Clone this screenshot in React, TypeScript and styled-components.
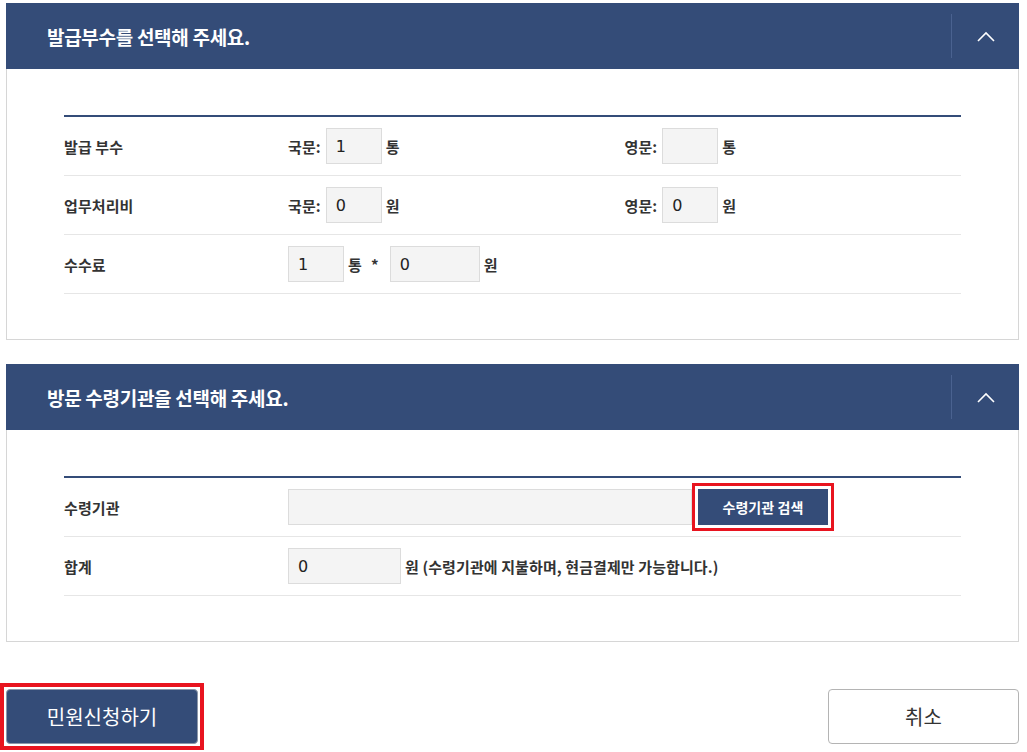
import styled, { createGlobalStyle } from "styled-components";

const NAVY = "#344c78";

const GlobalStyle = createGlobalStyle`
  html, body {
    margin: 0;
    padding: 0;
    background: #fff;
  }
  body {
    font-family: "Noto Sans CJK KR", "Noto Sans", sans-serif;
    color: #333;
  }
  * {
    box-sizing: border-box;
  }
`;

const Page = styled.div`
  width: 1027px;
  padding: 3px 8px 0 6px;
`;

const Panel = styled.section`
  border: 1px solid #d6d6d6;
  border-top: 0;
  & + & {
    margin-top: 24px;
  }
`;

const PanelHeader = styled.div`
  height: 66px;
  margin: 0 -1px;
  background: ${NAVY};
  display: flex;
  align-items: center;
  padding-left: 41px;
`;

const PanelTitle = styled.h2`
  flex: 1;
  margin: 0;
  color: #fff;
  font-size: 19px;
  font-weight: 700;
  letter-spacing: -0.3px;
`;

const Toggle = styled.button`
  width: 68px;
  height: 44px;
  border: 0;
  border-left: 1px solid #4a6290;
  background: transparent;
  display: flex;
  align-items: center;
  justify-content: center;
  padding: 0;
  cursor: pointer;
`;

const PanelBody = styled.div`
  padding: 46px 57px 45px;
`;

const Table = styled.div`
  border-top: 2px solid ${NAVY};
`;

const Row = styled.div`
  display: grid;
  grid-template-columns: 224px 1fr 1fr;
  align-items: center;
  height: 59px;
  border-bottom: 1px solid #e6e6e6;
`;

const Label = styled.div`
  font-size: 15px;
  font-weight: 700;
  letter-spacing: 0.1px;
  color: #333;
`;

const Field = styled.div<{ $span?: boolean }>`
  display: flex;
  align-items: center;
  font-size: 15px;
  font-weight: 700;
  color: #333;
  letter-spacing: 0.1px;
  ${(p) => (p.$span ? "grid-column: 2 / 4;" : "")}
`;

const Unit = styled.span<{ $gap?: number }>`
  margin-left: ${(p) => p.$gap ?? 4}px;
  white-space: nowrap;
`;

const Box = styled.input<{ $w: number; $gap?: number }>`
  width: ${(p) => p.$w}px;
  height: 36px;
  margin-left: ${(p) => p.$gap ?? 0}px;
  padding: 0 0 0 9px;
  background: #f4f4f4;
  border: 1px solid #dcdcdc;
  border-radius: 0;
  font-family: "DejaVu Sans", "Noto Sans CJK KR", sans-serif;
  font-size: 16px;
  color: #222;
  outline: none;
`;

const SearchButton = styled.button`
  margin-left: 6px;
  width: 130px;
  height: 36px;
  background: ${NAVY};
  color: #fff;
  border: 0;
  font-family: "Noto Sans CJK KR", sans-serif;
  font-size: 14px;
  font-weight: 700;
  letter-spacing: 0.1px;
  outline: 3px solid #e8141f;
  outline-offset: 3px;
  cursor: pointer;
`;

const Actions = styled.div`
  display: flex;
  justify-content: space-between;
  align-items: flex-start;
  margin: 41px 0 0 -6px;
`;

const Highlight = styled.div`
  display: inline-flex;
  border: 4px solid #e8141f;
  padding: 2px;
`;

const ActionButton = styled.button<{ $primary?: boolean }>`
  width: ${(p) => (p.$primary ? 192 : 191)}px;
  height: 55px;
  margin-top: ${(p) => (p.$primary ? 0 : 6)}px;
  border-radius: 4px;
  border: 1px solid ${(p) => (p.$primary ? "#8d97a8" : "#b4b4b4")};
  background: ${(p) => (p.$primary ? NAVY : "#fff")};
  color: ${(p) => (p.$primary ? "#fff" : "#333")};
  font-family: "Noto Sans CJK KR", sans-serif;
  font-size: 20px;
  font-weight: 400;
  cursor: pointer;
`;

function Chevron() {
  return (
    <svg width="18" height="11" viewBox="0 0 18 11" fill="none">
      <path d="M1 10 L9 2 L17 10" stroke="#fff" strokeWidth="1.6" />
    </svg>
  );
}

export default function App() {
  return (
    <>
      <GlobalStyle />
      <Page>
        <Panel>
          <PanelHeader>
            <PanelTitle>발급부수를 선택해 주세요.</PanelTitle>
            <Toggle aria-label="접기">
              <Chevron />
            </Toggle>
          </PanelHeader>
          <PanelBody>
            <Table>
              <Row>
                <Label>발급 부수</Label>
                <Field>
                  국문:
                  <Box $w={56} $gap={5} value="1" readOnly />
                  <Unit>통</Unit>
                </Field>
                <Field>
                  영문:
                  <Box $w={56} $gap={5} value="" readOnly />
                  <Unit>통</Unit>
                </Field>
              </Row>
              <Row>
                <Label>업무처리비</Label>
                <Field>
                  국문:
                  <Box $w={56} $gap={5} value="0" readOnly />
                  <Unit>원</Unit>
                </Field>
                <Field>
                  영문:
                  <Box $w={56} $gap={5} value="0" readOnly />
                  <Unit>원</Unit>
                </Field>
              </Row>
              <Row>
                <Label>수수료</Label>
                <Field $span>
                  <Box $w={56} value="1" readOnly />
                  <Unit>통</Unit>
                  <Unit $gap={9}>*</Unit>
                  <Box $w={90} $gap={11} value="0" readOnly />
                  <Unit>원</Unit>
                </Field>
              </Row>
            </Table>
          </PanelBody>
        </Panel>

        <Panel>
          <PanelHeader>
            <PanelTitle>방문 수령기관을 선택해 주세요.</PanelTitle>
            <Toggle aria-label="접기">
              <Chevron />
            </Toggle>
          </PanelHeader>
          <PanelBody>
            <Table>
              <Row>
                <Label>수령기관</Label>
                <Field $span>
                  <Box $w={404} value="" readOnly />
                  <SearchButton>수령기관 검색</SearchButton>
                </Field>
              </Row>
              <Row>
                <Label>합계</Label>
                <Field $span>
                  <Box $w={113} value="0" readOnly />
                  <Unit>원 (수령기관에 지불하며, 현금결제만 가능합니다.)</Unit>
                </Field>
              </Row>
            </Table>
          </PanelBody>
        </Panel>

        <Actions>
          <Highlight>
            <ActionButton $primary>민원신청하기</ActionButton>
          </Highlight>
          <ActionButton>취소</ActionButton>
        </Actions>
      </Page>
    </>
  );
}
